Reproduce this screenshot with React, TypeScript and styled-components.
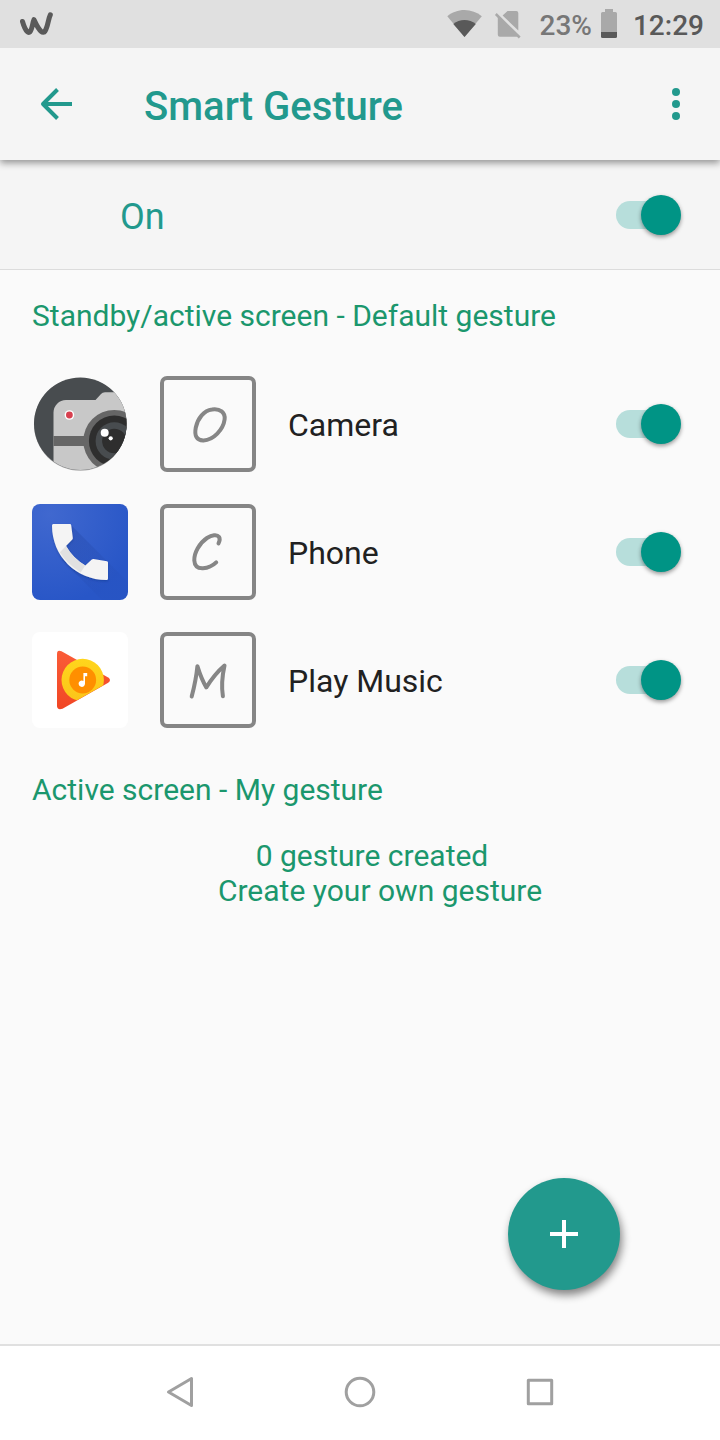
import React, { useState } from "react";
import styled, { createGlobalStyle } from "styled-components";

const teal = "#22998d";
const green = "#1b976d";

const GlobalStyle = createGlobalStyle`
  *, *::before, *::after { box-sizing: border-box; }
  body {
    margin: 0;
    background: #fafafa;
    color: #212121;
    font-family: Roboto, "Liberation Sans", sans-serif;
  }
  h1, h2, p, ul { margin: 0; padding: 0; }
  button { border: 0; padding: 0; background: none; cursor: pointer; }
  svg { display: block; }
`;

const Screen = styled.div`
  position: relative;
  display: flex;
  flex-direction: column;
  min-height: 100vh;
`;

const StatusBar = styled.div`
  position: relative;
  z-index: 2;
  display: flex;
  align-items: center;
  height: 48px;
  padding: 0 16px 0 20px;
  background: #e0e0e0;
  font-size: 28px;
  font-weight: 500;
  line-height: 32px;
`;

const StatusItems = styled.div`
  display: flex;
  align-items: center;
  margin-left: auto;
`;

const StatusText = styled.span<{ $strong?: boolean }>`
  padding-top: 3px;
  margin-left: ${(p) => (p.$strong ? 15 : 18)}px;
  color: ${(p) => (p.$strong ? "#595959" : "#777777")};
`;

const StatusIcon = styled.svg<{ $gap?: number }>`
  margin-left: ${(p) => p.$gap ?? 0}px;
`;

const AppBar = styled.header`
  position: relative;
  z-index: 1;
  display: flex;
  align-items: center;
  height: 112px;
  background: #f5f5f5;
  color: ${teal};
  box-shadow: 0 3px 7px rgba(0, 0, 0, 0.4);
`;

const IconButton = styled.button`
  display: grid;
  place-items: center;
  width: 88px;
  height: 112px;
  color: inherit;
`;

const Title = styled.h1`
  flex: 1;
  padding: 6px 0 0 32px;
  font-size: 40px;
  font-weight: 500;
  line-height: 48px;
`;

const BackButton = styled(IconButton)`
  width: 112px;
`;

const MasterSwitch = styled.label`
  display: flex;
  align-items: center;
  justify-content: space-between;
  height: 110px;
  padding: 0 40px 0 120px;
  border-bottom: 1px solid #dcdcdc;
  background: #f5f5f5;
  color: ${teal};
  font-size: 36px;
  line-height: 44px;
`;

const MasterLabel = styled.span`
  padding-top: 4px;
`;

const Switch = styled.input`
  appearance: none;
  position: relative;
  flex: none;
  width: 64px;
  height: 28px;
  margin: 0;
  border-radius: 14px;
  background: #c4c4c4;
  cursor: pointer;

  &::before {
    content: "";
    position: absolute;
    top: -6px;
    left: -1px;
    width: 40px;
    height: 40px;
    border-radius: 50%;
    background: #f1f1f1;
    box-shadow: 0 2px 4px rgba(0, 0, 0, 0.4);
  }
  &:checked { background: #b7dedb; }
  &:checked::before { left: 25px; background: #009485; }
`;

const Content = styled.main`
  flex: 1;
  padding: 28px 0 160px;
`;

const SectionTitle = styled.h2`
  padding: 0 32px;
  color: ${green};
  font-size: 30px;
  font-weight: 400;
  line-height: 36px;
`;

const GestureList = styled.ul`
  display: flex;
  flex-direction: column;
  gap: 32px;
  padding: 42px 40px 44px 32px;
  list-style: none;
`;

const GestureRow = styled.label`
  display: flex;
  align-items: center;
  gap: 32px;
`;

const GestureBox = styled.span`
  display: grid;
  place-items: center;
  width: 96px;
  height: 96px;
  border: 4px solid #858585;
  border-radius: 7px;
`;

const AppName = styled.span`
  flex: 1;
  padding-top: 2px;
  font-size: 32px;
  line-height: 40px;
`;

const EmptyState = styled.div`
  padding: 30px 0 0 40px;
  color: ${green};
  font-size: 30px;
  line-height: 35px;
  text-align: center;
`;

const EmptyCount = styled.p`
  padding-right: 16px;
`;

const AddButton = styled.button`
  position: absolute;
  right: 100px;
  bottom: 150px;
  display: grid;
  place-items: center;
  width: 112px;
  height: 112px;
  border-radius: 50%;
  background: ${teal};
  box-shadow: 2px 5px 9px rgba(0, 0, 0, 0.48);
`;

const NavBar = styled.nav`
  display: flex;
  justify-content: center;
  height: 96px;
  padding-bottom: 2px;
  border-top: 2px solid #e0e0e0;
  background: #ffffff;
`;

const NavButton = styled.button`
  display: grid;
  place-items: center;
  width: 25%;
`;

const CameraIcon = () => (
  <svg width="96" height="96" viewBox="0 0 96 96" aria-hidden="true">
    <defs>
      <clipPath id="camera-disc"><circle cx="48.3" cy="47.8" r="46.3" /></clipPath>
    </defs>
    <circle cx="48.3" cy="48.4" r="46.3" fill="#a9a9a9" />
    <g clipPath="url(#camera-disc)">
      <rect width="96" height="96" fill="#484c4f" />
      <path d="M21.5 96V36.5a12.5 12.5 0 0 1 12.5-12.5h29.5l5.5-6q1.4-1.7 4-1.7h23V96z" fill="#c8c8c8" />
      <path d="M21.5 60H56v10H21.5z" fill="#666" />
      <circle cx="82.3" cy="65" r="31" fill="#666" />
      <circle cx="82.3" cy="65" r="25.4" fill="#2e2e2e" />
      <circle cx="82.3" cy="65" r="18.7" fill="#484c4f" />
      <circle cx="82.3" cy="65" r="12.2" fill="#2e2e2e" />
      <circle cx="72.7" cy="56.7" r="4" fill="#fff" />
      <circle cx="78.7" cy="62.3" r="2.1" fill="#fff" />
      <circle cx="37.4" cy="39" r="4.8" fill="#fff" />
      <circle cx="37.4" cy="39" r="3.4" fill="#d7404f" />
    </g>
  </svg>
);

const PhoneIcon = () => (
  <svg width="96" height="96" viewBox="0 0 96 96" aria-hidden="true">
    <defs>
      <radialGradient id="phone-bg" gradientUnits="userSpaceOnUse" cx="18" cy="10" r="90">
        <stop offset="0" stopColor="#4068cf" />
        <stop offset="1" stopColor="#2856c7" />
      </radialGradient>
      <linearGradient id="phone-shade" gradientUnits="userSpaceOnUse" x1="40" y1="35" x2="82" y2="77">
        <stop offset="0" stopColor="#1c3c94" stopOpacity="0.26" />
        <stop offset="1" stopColor="#1c3c94" stopOpacity="0.06" />
      </linearGradient>
      <filter id="phone-drop" x="-20%" y="-20%" width="140%" height="150%">
        <feDropShadow dx="0" dy="1.2" stdDeviation="1.3" floodColor="#102b70" floodOpacity="0.35" />
      </filter>
    </defs>
    <rect width="96" height="96" rx="8" fill="url(#phone-bg)" />
    <path d="M39 21L75 57L96 78V88a8 8 0 0 1-8 8H70L30 56z" fill="url(#phone-shade)" />
    <g filter="url(#phone-drop)">
      <path d="M21.3 20H37.8q1.3 0 1.4 1.2L40.8 34q.1.9-.5 1.5L34 42q7 12.300 19.300 19.500l6.500-6q.7-.6 1.600-.5L75 57.300q1 .2 1 1.200V74.500q0 1.500-1.500 1.500C44 76 20 52 20 21.500q0-1.500 1.300-1.500z" fill="#f4f4f4" />
      <path d="M34 42q7 12.300 19.300 19.500L48.700 68.500Q35 60 27.800 48.300z" fill="#e1e1e1" />
    </g>
  </svg>
);

const PlayMusicIcon = () => (
  <svg width="96" height="96" viewBox="0 0 96 96" aria-hidden="true">
    <defs>
      <linearGradient id="music-red" x1="0" y1="0" x2="0" y2="1">
        <stop offset="0" stopColor="#fa5c38" />
        <stop offset="1" stopColor="#f14624" />
      </linearGradient>
      <linearGradient id="music-yellow" x1="0" y1="0" x2="0" y2="1">
        <stop offset="0" stopColor="#ffd51c" />
        <stop offset="1" stopColor="#fbc51a" />
      </linearGradient>
      <clipPath id="music-cut"><path d="M0 0H96V38.300L76.600 50.300L30.500 76.500L0 94z" /></clipPath>
    </defs>
    <rect width="96" height="96" rx="8" fill="#fff" />
    <path d="M25 22q0-4.600 4.500-2.700L76.200 45.500q3.600 2.600 0 5.200L30.500 76.800q-5.500 1.700-5.500-3z" fill="url(#music-red)" />
    <circle cx="50.700" cy="48" r="21.200" fill="url(#music-yellow)" clipPath="url(#music-cut)" />
    <circle cx="50.700" cy="48" r="13.400" fill="#ff8f00" />
    <path d="M51.400 41H55.200V44.200H53V51.700a3.200 3.200 0 1 1-1.600-2.800z" fill="#fff" />
  </svg>
);

const strokes: Record<string, string> = {
  circle: "M52 33.500C60 32.300 65.500 36.500 64.600 43.500C63.300 53.500 53.500 64 43.500 64.400C36.500 64.600 34.200 59.500 35.800 51.500C37.800 42 44 34.500 52 33.500Z",
  arc: "M58.500 39.400C59.700 37 60 34.500 59 32.900C57 30 51.800 31 47 34C39.500 39 34 49 34.300 56.500C34.600 62 38 64.500 43 64.300C48.500 64 53 61.500 56.200 58.400",
  zigzag: "M31.700 64.500C34.200 55 36.500 43.500 37.400 34.200C39.800 42 42.500 49 46.300 55.400C51.500 47 57.500 39.500 64.500 33.500C62.300 43.500 61.300 54.500 62.900 64.300",
};

const GestureMark = ({ shape }: { shape: string }) => (
  <svg width="88" height="88" viewBox="4 4 88 88" fill="none" stroke="#868686" strokeWidth="4" strokeLinecap="round" strokeLinejoin="round" aria-hidden="true">
    <path d={strokes[shape]} />
  </svg>
);

const gestures = [
  { name: "Camera", shape: "circle", Icon: CameraIcon },
  { name: "Phone", shape: "arc", Icon: PhoneIcon },
  { name: "Play Music", shape: "zigzag", Icon: PlayMusicIcon },
];

export default function App() {
  const [on, setOn] = useState(true);
  const [active, setActive] = useState([true, true, true]);

  return (
    <Screen>
      <GlobalStyle />
      <StatusBar>
        <svg width="34" height="48" viewBox="20 0 34 48" fill="none" stroke="#5a5a5a" strokeWidth="5" strokeLinecap="round" strokeLinejoin="round" aria-hidden="true">
          <path d="M22.500 21.500C23.500 25 25.500 30 27.400 31.800C28.200 32.600 29.300 32.600 30 31.800C32.300 29 32.600 22.500 34 19.700C35.300 22.500 37.800 28.500 41.400 31.600C42.500 32.600 44.200 32.600 45 31.200C48 26.500 48.200 19 50.300 14.800" />
        </svg>
        <StatusItems>
          <StatusIcon width="36" height="48" viewBox="447 0 36 48" aria-hidden="true">
            <path d="M464.500 37L447.300 16.200C452 12.300 458 10 464.500 10S477 12.300 481.800 16.200z" fill="#a9a9a9" />
            <path d="M464.500 37L453.300 24C456.500 21.300 460.300 20 464.500 20S472.500 21.300 475.800 24z" fill="#595959" />
          </StatusIcon>
          <StatusIcon $gap={11} width="28" height="48" viewBox="494 0 28 48" aria-hidden="true">
            <path d="M507.500 11H516.300a2 2 0 0 1 2 2V30.500L502.600 15.500zM497.800 16L518.300 35.600q-.4 1.100-2 1.100H499.800a2 2 0 0 1-2-2z" fill="#a9a9a9" />
            <path d="M495.800 14L519.700 37.500" stroke="#a9a9a9" strokeWidth="2.600" />
          </StatusIcon>
          <StatusText>23%</StatusText>
          <StatusIcon $gap={9} width="17" height="48" viewBox="601 0 17 48" aria-hidden="true">
            <path d="M605 9h8v3h2.500q1.500 0 1.500 1.500V32H601V13.500q0-1.500 1.500-1.500H605z" fill="#a9a9a9" />
            <path d="M601 32h16v4.500q0 1.500-1.500 1.500h-13q-1.500 0-1.500-1.500z" fill="#595959" />
          </StatusIcon>
          <StatusText $strong>12:29</StatusText>
        </StatusItems>
      </StatusBar>

      <AppBar>
        <BackButton aria-label="Back">
          <svg width="34" height="34" viewBox="0 0 34 34" fill="none" stroke="currentColor" strokeWidth="4" aria-hidden="true">
            <path d="M33 17H4M18.500 2.500L4 17L18.500 31.500" strokeLinejoin="round" />
          </svg>
        </BackButton>
        <Title>Smart Gesture</Title>
        <IconButton aria-label="More options">
          <svg width="8" height="32" viewBox="0 0 8 32" fill="currentColor" aria-hidden="true">
            <circle cx="4" cy="4" r="4" />
            <circle cx="4" cy="16" r="4" />
            <circle cx="4" cy="28" r="4" />
          </svg>
        </IconButton>
      </AppBar>

      <MasterSwitch>
        <MasterLabel>{on ? "On" : "Off"}</MasterLabel>
        <Switch type="checkbox" role="switch" checked={on} onChange={() => setOn(!on)} />
      </MasterSwitch>

      <Content>
        <SectionTitle>Standby/active screen - Default gesture</SectionTitle>
        <GestureList>
          {gestures.map(({ name, shape, Icon }, i) => (
            <li key={name}>
              <GestureRow>
                <Icon />
                <GestureBox><GestureMark shape={shape} /></GestureBox>
                <AppName>{name}</AppName>
                <Switch
                  type="checkbox"
                  role="switch"
                  checked={active[i]}
                  onChange={() => setActive(active.map((v, j) => (j === i ? !v : v)))}
                />
              </GestureRow>
            </li>
          ))}
        </GestureList>
        <SectionTitle>Active screen - My gesture</SectionTitle>
        <EmptyState>
          <EmptyCount>0 gesture created</EmptyCount>
          <p>Create your own gesture</p>
        </EmptyState>
      </Content>

      <AddButton aria-label="Add gesture">
        <svg width="28" height="28" viewBox="0 0 28 28" fill="#fff" aria-hidden="true">
          <path d="M12 0h4v12h12v4H16v12h-4V16H0v-4h12z" />
        </svg>
      </AddButton>

      <NavBar aria-label="System navigation">
        <NavButton aria-label="Back">
          <svg width="28" height="32" viewBox="0 0 28 32" fill="none" stroke="#a0a0a0" strokeWidth="3" strokeLinejoin="round" aria-hidden="true">
            <path d="M25.500 2.500V29.500L2.500 16z" />
          </svg>
        </NavButton>
        <NavButton aria-label="Home">
          <svg width="32" height="32" viewBox="0 0 32 32" fill="none" stroke="#a0a0a0" strokeWidth="3" aria-hidden="true">
            <circle cx="16" cy="16" r="13.800" />
          </svg>
        </NavButton>
        <NavButton aria-label="Recent apps">
          <svg width="28" height="28" viewBox="0 0 28 28" fill="none" stroke="#a0a0a0" strokeWidth="3" strokeLinejoin="round" aria-hidden="true">
            <path d="M2.300 2.300H25.700V25.700H2.300z" />
          </svg>
        </NavButton>
      </NavBar>
    </Screen>
  );
}
